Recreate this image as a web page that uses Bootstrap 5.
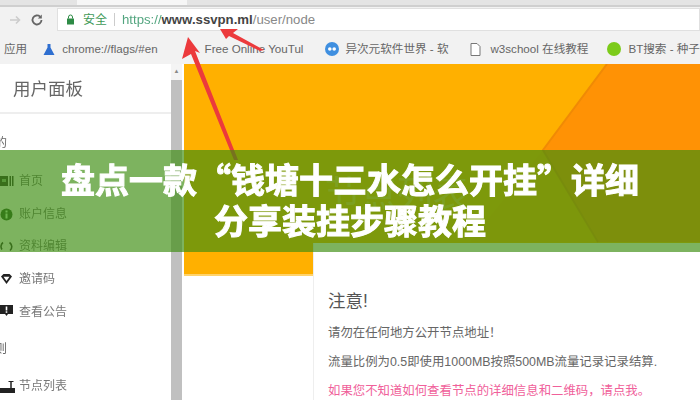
<!DOCTYPE html>
<html lang="zh-CN">
<head>
  <meta charset="UTF-8">
  <title>盘点一款“钱塘十三水怎么开挂”详细分享装挂步骤教程</title>
  <link href="https://cdn.jsdelivr.net/npm/bootstrap@5.3.0/dist/css/bootstrap.min.css" rel="stylesheet">
  <style>
    html, body { width: 700px; height: 400px; overflow: hidden; }
    body { font-family: "Liberation Sans", "Noto Sans CJK SC", sans-serif; background: #fff; color: #555; }
    .shot { height: 400px; overflow: hidden; filter: blur(.7px); }

    .tab-strip { height: 7px; background: #e4e4e4; border-bottom: 2px solid #cfcfcf; }
    .tab-on { width: 110px; margin-left: 77px; background: #f6f6f6; }
    .url-row { height: 25px; background: #f2f2f2; padding-left: 4px; }
    .url-box { height: 23px; margin-left: 13px; flex: 1; background: #fff; border: 1px solid #e0e0e0; font-size: 13.2px; color: #888; }
    .secure { color: #3f9a58; font-size: 12px; }
    .sep { width: 1px; height: 13px; background: #ccc; margin: 0 -1px; }
    .host { color: #444; font-weight: 700; }
    .marks { height: 32px; padding-top: 2px; background: #f2f2f2; font-size: 11.6px; color: #666; white-space: nowrap; overflow: hidden; }
    .mark-item { flex: none; }
    .mark-icon { flex: none; }

    .sidebar { width: 171px; flex: none; height: 336px; overflow: hidden; }
    .side-head { height: 50px; padding-top: 3px; border-bottom: 2px solid #eee; font-size: 17.5px; color: #666; padding-left: 13px; }
    .side-item { height: 32.6px; font-size: 12px; color: #777; padding-left: 19px; position: relative; }
    .side-icon { position: absolute; left: 0; top: 10px; }
    .group-top { height: 51px; padding-top: 7px; font-size: 12px; color: #666; margin-left: -5px; }
    .group-mid { height: 42px; font-size: 12px; color: #666; margin-left: -5px; }
    .scroll-col { width: 11px; flex: none; margin-right: 2px; background: #c0c0c0; }
    .scroll-top { height: 16px; background: #f4f4f4; font-size: 6px; color: #888; text-align: center; line-height: 14px; }

    .content-col { flex: 1; min-width: 0; }
    .hero { height: 212px; }
    .hero svg { display: block; }
    .notice { margin: -33px 0 0 129px; height: 157px; position: relative; background: #fff; border-left: 1px solid #eee; padding: 48px 0 0 14px; font-size: 12.4px; color: #666; white-space: nowrap; }
    .notice h5 { font-size: 17.5px; line-height: 21px; color: #555; margin-bottom: 13px; font-weight: 400; }
    .notice p { margin-bottom: 13px; line-height: 16px; }
    .notice .pink { color: #f0609a; }

    .arrows { position: absolute; left: 0; top: 0; }

    /* title strip sits over the screenshot */
    .title-band { position: absolute; left: 0; top: 150px; width: 700px; height: 102px; background: rgba(61, 142, 16, .67); display: flex; align-items: center; justify-content: center; }
    .title-band h1 { width: 590px; margin: 0; padding-bottom: 4px; text-align: center; color: #fff; font-family: "Noto Sans CJK SC", sans-serif; font-weight: 700; font-size: 34px; line-height: 41px; -webkit-text-stroke: 1px #fff; }
  </style>
</head>
<body>
  <div class="shot">
    <div class="tab-strip d-flex"><div class="tab-on"></div></div>
    <div class="url-row d-flex align-items-center">
      <svg width="14" height="14" viewBox="0 0 14 14" class="ms-1"><path d="M2 7h9M8 3.500 11.500 7 8 10.500" fill="none" stroke="#ccc" stroke-width="1.600"/></svg>
      <svg width="14" height="14" viewBox="0 0 14 14" class="ms-2"><path d="M11.500 7a4.500 4.500 0 1 1-1.400-3.300" fill="none" stroke="#666" stroke-width="1.800"/><path d="M11.800 1.500v4h-4z" fill="#666"/></svg>
      <div class="url-box d-flex align-items-center gap-2 ps-2">
        <svg width="9" height="11" viewBox="0 0 9 11"><rect x="1" y="4.500" width="7" height="6" fill="#2e8b46"/><path d="M2.500 4.500V3a2 2 0 0 1 4 0v1.500" fill="none" stroke="#2e8b46"/></svg>
        <span class="secure">安全</span>
        <span class="sep"></span>
        <span><span class="text-success opacity-75">https://</span><span class="host">www.ssvpn.ml</span>/user/node</span>
      </div>
    </div>
    <div class="marks d-flex align-items-center">
      <span class="mark-item ms-1">应用</span>
      <svg width="12" height="13" viewBox="0 0 12 13" class="mark-icon" style="margin-left:16px;margin-right:7px"><path d="M4.500 1h3v3.500L11.500 12H.5l4-7.500z" fill="#2f6fd0"/></svg>
      <span class="mark-item">chrome://flags/#en</span>
      <span class="mark-item" style="margin-left:47px">Free Online YouTul</span>
      <svg width="14" height="14" viewBox="0 0 14 14" class="mark-icon" style="margin-left:22px"><circle cx="7" cy="7" r="7" fill="#3f8fe0"/><circle cx="4.800" cy="7" r="1.800" fill="#fff"/><circle cx="9.200" cy="7" r="1.800" fill="#fff"/></svg>
      <span class="mark-item" style="margin-left:6px">异次元软件世界 - 软</span>
      <svg width="11" height="13" viewBox="0 0 11 13" class="mark-icon" style="margin-left:22px"><path d="M1 .5h6l3 3v9H1z" fill="#fff" stroke="#777"/></svg>
      <span class="mark-item" style="margin-left:9px">w3school 在线教程</span>
      <svg width="14" height="14" viewBox="0 0 14 14" class="mark-icon" style="margin-left:19px"><circle cx="7" cy="7" r="7" fill="#7ccb1a"/></svg>
      <span class="mark-item" style="margin-left:7px">BT搜索 - 种子搜</span>
    </div>
    <div class="d-flex">
      <div class="sidebar">
        <div class="side-head d-flex align-items-center">用户面板</div>
        <div class="group-top d-flex align-items-center">的</div>
        <div class="side-item d-flex align-items-center">
          <svg class="side-icon" width="14" height="12" viewBox="0 0 14 12"><rect x="0" y="1" width="8" height="10" fill="#333"/><rect x="2" y="4" width="4" height="3" fill="#8a8"/><rect x="9.500" y="1" width="1.500" height="10" fill="#333"/><rect x="12" y="1" width="1.500" height="10" fill="#333"/></svg>
          首页
        </div>
        <div class="side-item d-flex align-items-center">
          <svg class="side-icon" width="13" height="13" viewBox="0 0 13 13"><circle cx="6.500" cy="6.500" r="6" fill="#2c5a2c"/><rect x="5.500" y="5.500" width="2" height="5" fill="#cfc"/><rect x="5.500" y="2.500" width="2" height="2" fill="#cfc"/></svg>
          账户信息
        </div>
        <div class="side-item d-flex align-items-center">
          <svg class="side-icon" width="13" height="13" viewBox="0 0 13 13"><path d="M3 2.500a5 5 0 0 0-1 7M9.500 2.500a5 5 0 0 1 .5 8" fill="none" stroke="#333" stroke-width="1.600"/></svg>
          资料编辑
        </div>
        <div class="side-item d-flex align-items-center">
          <svg class="side-icon" width="13" height="12" viewBox="0 0 13 12"><path d="M1 3.500 3.500 1h6L12 3.500 6.500 11z" fill="#222"/><path d="M3.500 3.800h6L6.500 8z" fill="#fff"/></svg>
          邀请码
        </div>
        <div class="side-item d-flex align-items-center">
          <svg class="side-icon" width="13" height="12" viewBox="0 0 13 12"><path d="M0 0h13v9H8l-1.500 2L5 9H0z" fill="#222"/><rect x="5.700" y="1.500" width="1.600" height="4" fill="#fff"/><rect x="5.700" y="6.300" width="1.600" height="1.500" fill="#fff"/></svg>
          查看公告
        </div>
        <div class="group-mid d-flex align-items-center">则</div>
        <div class="side-item d-flex align-items-center">
          <svg class="side-icon" width="16" height="14" viewBox="0 0 16 14"><rect x="0" y="8" width="15" height="5" fill="#222"/><path d="M11 8V2" stroke="#222" stroke-width="1.500"/><path d="M8.500 1.500h5" stroke="#222"/></svg>
          节点列表
        </div>
      </div>
      <div class="scroll-col"><div class="scroll-top">▲</div></div>
      <div class="content-col">
        <div class="hero">
          <svg width="516" height="212" viewBox="0 0 516 212">
            <rect width="516" height="212" fill="#ffb000"/>
            <polygon points="359,86 286,178 414,178" fill="#fdaa00"/>
            <polygon points="423,0 516,0 516,178 414,178 359,86" fill="#ff9205"/>
            <path d="M423 0 359 86 414 178" fill="none" stroke="#f08a05" stroke-width="2"/>
            <text x="141" y="143" font-size="36" fill="#fff" fill-opacity=".3">节点列表</text>
            <rect y="210" width="516" height="2" fill="#ffd36b"/>
          </svg>
        </div>
        <div class="notice">
          <h5>注意!</h5>
          <p>请勿在任何地方公开节点地址！</p>
          <p>流量比例为0.5即使用1000MB按照500MB流量记录记录结算.</p>
          <p class="pink">如果您不知道如何查看节点的详细信息和二维码，请点我。</p>
        </div>
      </div>
    </div>
    <svg class="arrows" width="700" height="170" viewBox="0 0 700 170">
      <polygon points="188,37 200,53 195,51 238,160 234,160 191,54 182,59" fill="#ec3a3c"/>
      <polygon points="220,29 238,29 233,33 264,50 260,51 229,36 226,39" fill="#ec3a3c"/>
    </svg>
  </div>
  <div class="title-band">
    <h1>盘点一款“钱塘十三水怎么开挂”详细分享装挂步骤教程</h1>
  </div>
  <script src="https://cdn.jsdelivr.net/npm/bootstrap@5.3.0/dist/js/bootstrap.bundle.min.js"></script>
</body>
</html>
